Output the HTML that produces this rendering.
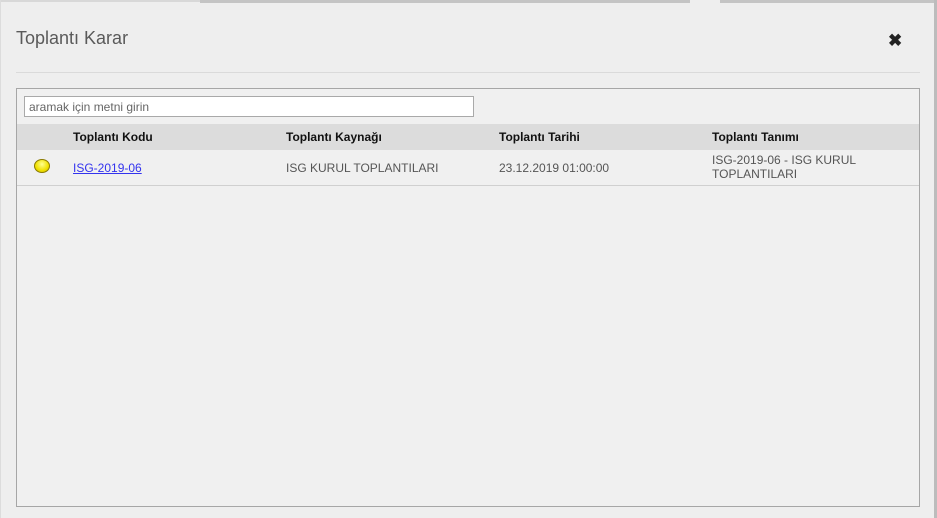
<!DOCTYPE html>
<html><head><meta charset="utf-8"><style>
*{margin:0;padding:0;box-sizing:border-box}
body{width:937px;height:518px;background:#eeeeee;font-family:"Liberation Sans",sans-serif;position:relative;overflow:hidden}
.tb1{position:absolute;top:0;left:0;width:200px;height:2px;background:#d8d8d8}
.tb2{position:absolute;top:0;left:200px;width:490px;height:3px;background:#c4c4c4}
.tb3{position:absolute;top:0;left:720px;width:217px;height:3px;background:#c4c4c4}
.rb{position:absolute;top:0;right:0;width:3px;height:518px;background:#bcbcbc}
.lb{position:absolute;top:0;left:0;width:1px;height:518px;background:#dcdcdc}
.title{position:absolute;left:16px;top:28px;font-size:18px;color:#5a5a5a}
.x{position:absolute;left:888px;top:31px;font-size:17px;font-weight:bold;color:#222}
.hr{position:absolute;left:16px;top:72px;width:904px;height:1px;background:#dadada}
.box{position:absolute;left:16px;top:88px;width:904px;height:419px;border:1px solid #a6a6a6;background:#f0f0f0}
.inp{position:absolute;left:7px;top:7px;width:450px;height:21px;border:1px solid #a9a9a9;background:#fff;font-size:12px;color:#666;padding:3px 4px}
.hd{position:absolute;left:0;top:35px;width:902px;height:26px;background:#dcdcdc;font-size:12px;font-weight:bold;color:#111}
.row{position:absolute;left:0;top:61px;width:902px;height:36px;border-bottom:1px solid #d0d0d0;font-size:12px;color:#555}
.c{position:absolute}
.lnk{color:#3333ee;text-decoration:underline}
.dot{position:absolute;left:17px;top:9px;width:16px;height:14px;border-radius:50%;border:1px solid #8a7a00;background:radial-gradient(circle at 50% 35%,#ffff90,#f0e000 60%,#c8b800)}
</style></head><body>
<div class="tb1"></div><div class="tb2"></div><div class="tb3"></div><div class="rb"></div><div class="lb"></div>
<div class="title">Toplantı Karar</div>
<div class="x">✖</div>
<div class="hr"></div>
<div class="box">
<div class="inp">aramak için metni girin</div>
<div class="hd">
<span class="c" style="left:56px;top:6px">Toplantı Kodu</span>
<span class="c" style="left:269px;top:6px">Toplantı Kaynağı</span>
<span class="c" style="left:482px;top:6px">Toplantı Tarihi</span>
<span class="c" style="left:695px;top:6px">Toplantı Tanımı</span>
</div>
<div class="row">
<div class="dot"></div>
<span class="c lnk" style="left:56px;top:11px">ISG-2019-06</span>
<span class="c" style="left:269px;top:11px">ISG KURUL TOPLANTILARI</span>
<span class="c" style="left:482px;top:11px">23.12.2019 01:00:00</span>
<span class="c" style="left:695px;top:3px;line-height:14px">ISG-2019-06 - ISG KURUL<br>TOPLANTILARI</span>
</div>
</div>
</body></html>
